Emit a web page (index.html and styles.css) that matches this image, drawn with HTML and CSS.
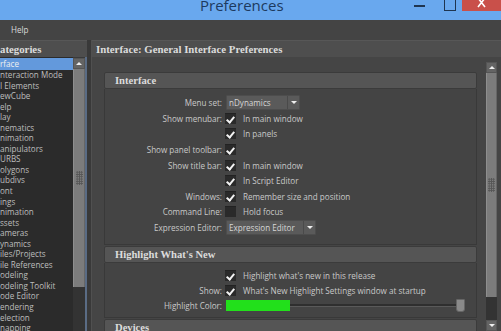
FILE: index.html
```html
<!DOCTYPE html>
<html lang="en">
<head>
    <meta charset="UTF-8">
    <title>Preferences</title>
    <link rel="stylesheet" href="styles.css">
</head>
<body>
    <div class="window">
        <!-- title bar -->
        <div class="titlebar">
            <span class="title">Preferences</span>
            <span class="btn-min"></span>
            <span class="btn-max"></span>
            <span class="btn-close">
                <svg width="10" height="8" viewBox="0 0 10 8"><path d="M1 -2 L8 7 M8 -2 L1 7" stroke="#fff" stroke-width="1.6"/></svg>
            </span>
        </div>
        <div class="menubar"><span>Help</span></div>

        <div class="main">
            <!-- categories -->
            <div class="sidebar">
                <div class="pane-head">ategories</div>
                <div class="sidebar-body">
                    <ul class="cat-list">
                        <li class="selected">rface</li>
                        <li>nteraction Mode</li>
                        <li>I Elements</li>
                        <li>ewCube</li>
                        <li>elp</li>
                        <li>lay</li>
                        <li>nematics</li>
                        <li>nimation</li>
                        <li>anipulators</li>
                        <li>URBS</li>
                        <li>olygons</li>
                        <li>ubdivs</li>
                        <li>ont</li>
                        <li>ings</li>
                        <li>nimation</li>
                        <li>ssets</li>
                        <li>ameras</li>
                        <li>ynamics</li>
                        <li>iles/Projects</li>
                        <li>ile References</li>
                        <li>odeling</li>
                        <li>odeling Toolkit</li>
                        <li>ode Editor</li>
                        <li>endering</li>
                        <li>election</li>
                        <li>napping</li>
                    </ul>
                    <div class="scrollbar sb-left">
                        <div class="sb-btn"></div>
                        <div class="sb-thumb"><span class="grip"></span></div>
                        <div class="sb-track"></div>
                    </div>
                </div>
            </div>

            <!-- preferences -->
            <div class="content">
                <div class="pane-head">Interface: General Interface Preferences</div>
                <div class="content-body">
                    <div class="sections">
                        <div class="section">
                            <div class="section-head">Interface</div>
                            <div class="section-body">
                                <div class="row">
                                    <span class="label">Menu set:</span>
                                    <span class="dropdown dd-menu"><span class="dd-text">nDynamics</span><span class="dd-arrow"></span></span>
                                </div>
                                <div class="row">
                                    <span class="label">Show menubar:</span>
                                    <span class="check on"></span><span class="opt">In main window</span>
                                </div>
                                <div class="row">
                                    <span class="label"></span>
                                    <span class="check on"></span><span class="opt">In panels</span>
                                </div>
                                <div class="row">
                                    <span class="label">Show panel toolbar:</span>
                                    <span class="check on"></span>
                                </div>
                                <div class="row">
                                    <span class="label">Show title bar:</span>
                                    <span class="check on"></span><span class="opt">In main window</span>
                                </div>
                                <div class="row">
                                    <span class="label"></span>
                                    <span class="check on"></span><span class="opt">In Script Editor</span>
                                </div>
                                <div class="row">
                                    <span class="label">Windows:</span>
                                    <span class="check on"></span><span class="opt">Remember size and position</span>
                                </div>
                                <div class="row">
                                    <span class="label">Command Line:</span>
                                    <span class="check"></span><span class="opt">Hold focus</span>
                                </div>
                                <div class="row">
                                    <span class="label">Expression Editor:</span>
                                    <span class="dropdown dd-expr"><span class="dd-text">Expression Editor</span><span class="dd-arrow"></span></span>
                                </div>
                            </div>
                        </div>

                        <div class="section">
                            <div class="section-head">Highlight What's New</div>
                            <div class="section-body body-short">
                                <div class="row">
                                    <span class="label"></span>
                                    <span class="check on"></span><span class="opt">Highlight what's new in this release</span>
                                </div>
                                <div class="row">
                                    <span class="label">Show:</span>
                                    <span class="check on"></span><span class="opt">What's New Highlight Settings window at startup</span>
                                </div>
                                <div class="row">
                                    <span class="label">Highlight Color:</span>
                                    <span class="swatch"></span>
                                    <span class="slider"><span class="slider-thumb"></span></span>
                                </div>
                            </div>
                        </div>

                        <div class="section">
                            <div class="section-head">Devices</div>
                        </div>
                    </div>
                    <div class="scrollbar sb-right">
                        <div class="sb-btn"></div>
                        <div class="sb-thumb"><span class="grip"></span></div>
                        <div class="sb-track"></div>
                        <div class="sb-btn sb-down"></div>
                    </div>
                </div>
            </div>
        </div>
    </div>
</body>
</html>
```

FILE: styles.css
```css
/* base */

body {
    margin: 0;
    width: 501px;
    height: 331px;
    overflow: hidden;
    background: #444;
    font-family: "Open Sans", "Noto Sans", sans-serif;
    font-size: 8.1px;
    color: #c9c9c9;
}

.window {
    display: flex;
    flex-direction: column;
    height: 331px;
}

/******************** title bar ***********************/

.titlebar {
    height: 20px;
    flex: none;
    /* red close block painted into the bar's top-right corner */
    background: linear-gradient(#c9504a, #c9504a) right top / 39px 11px no-repeat, #69a8ee;
    display: grid;
    grid-template-columns: 1fr 30px 18px 39px;
    align-items: start;
}

.title {
    margin-top: -2px;
    padding-left: 200px;
    font-size: 15px;
    line-height: 15px;
    color: #1d3a5e;
    white-space: nowrap;
}

.btn-min {
    width: 11px;
    height: 2px;
    margin-top: 5px;
    background: #1f3550;
}

.btn-max {
    width: 10px;
    height: 10px;
    margin-top: -1px;
    border: 1px solid #1f3550;
}

.btn-close {
    width: 39px;
    height: 11px;
    background: #c9504a;
    display: flex;
    justify-content: center;
    align-items: flex-start;
}

.btn-close svg {
    display: block;
}

.menubar {
    height: 20px;
    flex: none;
    background: #444;
    line-height: 20px;
    padding-left: 11px;
    color: #d9d9d9;
}

/******************** panes ***********************/

.main {
    flex: 1;
    display: flex;
    gap: 4px;
    background: #393939;
    min-height: 0;
}

.pane-head {
    height: 16px;
    flex: none;
    background: #4e4e4e;
    border-top: 1px solid #575757;
    font-family: "Liberation Serif", "DejaVu Serif", serif;
    font-weight: bold;
    font-size: 10.8px;
    line-height: 16px;
    color: #dcdcdc;
    white-space: nowrap;
}

.sidebar {
    width: 87px;
    display: flex;
    flex-direction: column;
}

.sidebar-body {
    flex: 1;
    display: flex;
    border-right: 2px solid #5a6c85;
    min-height: 0;
}

.cat-list {
    list-style: none;
    margin: 0;
    padding: 1px 0 0;
    width: 73px;
    background: #2b2b2b;
    overflow: hidden;
}

.cat-list li {
    height: 10.55px;
    line-height: 10.55px;
    white-space: nowrap;
    color: #bdbdbd;
}

.cat-list li.selected {
    height: 12px;
    line-height: 12px;
    background: #6399dc;
    color: #f0f0f0;
}

.content {
    flex: 1;
    display: flex;
    flex-direction: column;
    background: #454545;
    border-left: 1px solid #505050;
}

.content .pane-head {
    padding-left: 4px;
}

.content-body {
    flex: 1;
    display: flex;
    min-height: 0;
}

/******************** scrollbars ***********************/

.scrollbar {
    width: 12px;
    display: flex;
    flex-direction: column;
    background: #3a3a3a;
}

.sb-left {
    padding-top: 1px;
}

.sb-right {
    width: 11px;
    margin: 5px 4px 0 0;
}

.sb-btn {
    height: 11px;
    flex: none;
    background: #646464;
    border: 1px solid #555;
    box-sizing: border-box;
    display: flex;
    align-items: center;
    justify-content: center;
}

.sb-btn::after {
    content: "";
    border: 3px solid transparent;
    border-bottom: 3px solid #eee;
    border-top: 0;
}

.sb-thumb {
    flex: none;
    background: #7c7c7c;
    border-left: 1px solid #8e8e8e;
    border-right: 1px solid #666;
    display: flex;
    align-items: center;
    justify-content: center;
}

.sb-left .sb-thumb {
    height: 218px;
}

.sb-right .sb-thumb {
    height: 224px;
}

.grip {
    width: 7px;
    height: 14px;
    background-image: radial-gradient(circle, #555 0.8px, transparent 1px);
    background-size: 2.3px 2.3px;
}

.sb-track {
    flex: 1;
    background: #333;
}

.sb-down::after {
    border-bottom: 0;
    border-top: 3px solid #eee;
}

/******************** sections ***********************/

.sections {
    flex: 1;
    padding: 15px 9px 0 12px;
    display: flex;
    flex-direction: column;
    gap: 1px;
    overflow: hidden;
}

.section-head {
    height: 15px;
    background: #555;
    border: 1px solid #3b3b3b;
    border-radius: 2px;
    padding-left: 10px;
    font-family: "Liberation Serif", "DejaVu Serif", serif;
    font-weight: bold;
    font-size: 10.6px;
    line-height: 15px;
    color: #dcdcdc;
}

.section-body {
    height: 156px;
    box-sizing: border-box;
    padding-top: 6px;
    border: 1px solid #393939;
    border-top: 0;
    background: #444;
}

.section-body.body-short {
    height: 55px;
    padding-top: 5px;
}

.body-short .row {
    height: 15px;
}

.row {
    height: 15.6px;
    display: flex;
    align-items: center;
    white-space: nowrap;
}

.label {
    width: 119px;
    flex: none;
    box-sizing: border-box;
    padding-right: 2px;
    text-align: right;
}

.check {
    width: 11px;
    height: 11px;
    flex: none;
    background: #2a2a2a;
    border-top: 1px solid #222;
    box-sizing: border-box;
    margin-left: 1px;
    position: relative;
}

.check.on::after {
    content: "";
    position: absolute;
    left: 3px;
    top: 1px;
    width: 3px;
    height: 6px;
    border: solid #f2f2f2;
    border-width: 0 2px 2px 0;
    transform: rotate(40deg);
}

.opt {
    margin-left: 7px;
}

.dropdown {
    height: 15px;
    box-sizing: border-box;
    margin-left: 2px;
    display: flex;
    background: #5a5a5a;
    border: 1px solid #4d4d4d;
    border-radius: 1px;
    color: #d6d6d6;
}

.dd-menu {
    width: 74px;
}

.dd-expr {
    width: 90px;
}

.dd-text {
    flex: 1;
    padding-left: 2px;
    line-height: 13px;
}

.dd-arrow {
    width: 11px;
    border-left: 1px solid #4a4a4a;
    display: flex;
    align-items: center;
    justify-content: center;
}

.dd-arrow::after {
    content: "";
    border: 3px solid transparent;
    border-top: 3px solid #eee;
    border-bottom: 0;
}

.swatch {
    width: 64px;
    height: 11px;
    flex: none;
    margin-left: 2px;
    background: #22e01b;
}

.slider {
    flex: 1;
    height: 2px;
    margin-right: 15px;
    background: #2f2f2f;
    border-bottom: 1px solid #5a5a5a;
    display: flex;
    justify-content: flex-end;
    align-items: center;
}

.slider-thumb {
    width: 7px;
    height: 11px;
    margin-right: -4px;
    background: #8a8a8a;
    border: 1px solid #666;
    border-radius: 1px 1px 3px 3px;
}
```
